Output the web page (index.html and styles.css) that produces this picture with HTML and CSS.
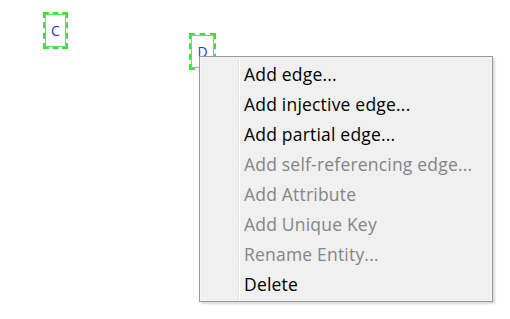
FILE: index.html
```html
<!DOCTYPE html>
<html>
<head>
<meta charset="utf-8">
<link rel="stylesheet" href="styles.css">
</head>
<body>
<div class="canvas">
  <div class="node node-c">C</div>
  <div class="node node-d">D</div>
  <div class="menu">
    <div class="gutter"></div>
    <ul class="items">
      <li class="item">Add edge...</li>
      <li class="item">Add injective edge...</li>
      <li class="item">Add partial edge...</li>
      <li class="item disabled">Add self-referencing edge...</li>
      <li class="item disabled">Add Attribute</li>
      <li class="item disabled">Add Unique Key</li>
      <li class="item disabled">Rename Entity...</li>
      <li class="item">Delete</li>
    </ul>
  </div>
</div>
</body>
</html>
```

FILE: styles.css
```css
html, body {
  margin: 0;
  padding: 0;
  background: #ffffff;
}
.canvas {
  position: relative;
  width: 510px;
  height: 319px;
  overflow: hidden;
  font-family: "Open Sans", "Noto Sans", sans-serif;
}
.node {
  position: absolute;
  box-sizing: border-box;
  border: 2px dashed #3be03b;
  box-shadow: inset 0 0 0 1px #5ee65e;
  color: #3030c8;
  font-size: 14px;
  display: flex;
  align-items: center;
  justify-content: center;
}
.node-c {
  left: 43px;
  top: 12px;
  width: 25px;
  height: 37px;
}
.node-d {
  left: 189px;
  top: 33px;
  width: 27px;
  height: 37px;
}
.menu {
  position: absolute;
  left: 199px;
  top: 56px;
  width: 294px;
  box-sizing: border-box;
  border: 1px solid #979797;
  background: #f0f0f0;
  box-shadow: inset 0 0 0 1px #f5f5f5, 2px 2px 2px rgba(0,0,0,0.15);
  padding: 2px 2px;
  display: flex;
}
.gutter {
  width: 36px;
  border-right: 1px solid #e2e3e3;
  box-shadow: 1px 0 0 #ffffff;
  flex: none;
}
.items {
  list-style: none;
  margin: 0;
  padding: 0 0 0 5px;
  flex: 1;
}
.item {
  height: 30px;
  line-height: 30px;
  font-size: 17.5px;
  letter-spacing: 0.2px;
  color: #000000;
  white-space: nowrap;
}
.item.disabled {
  color: #858585;
}
```
